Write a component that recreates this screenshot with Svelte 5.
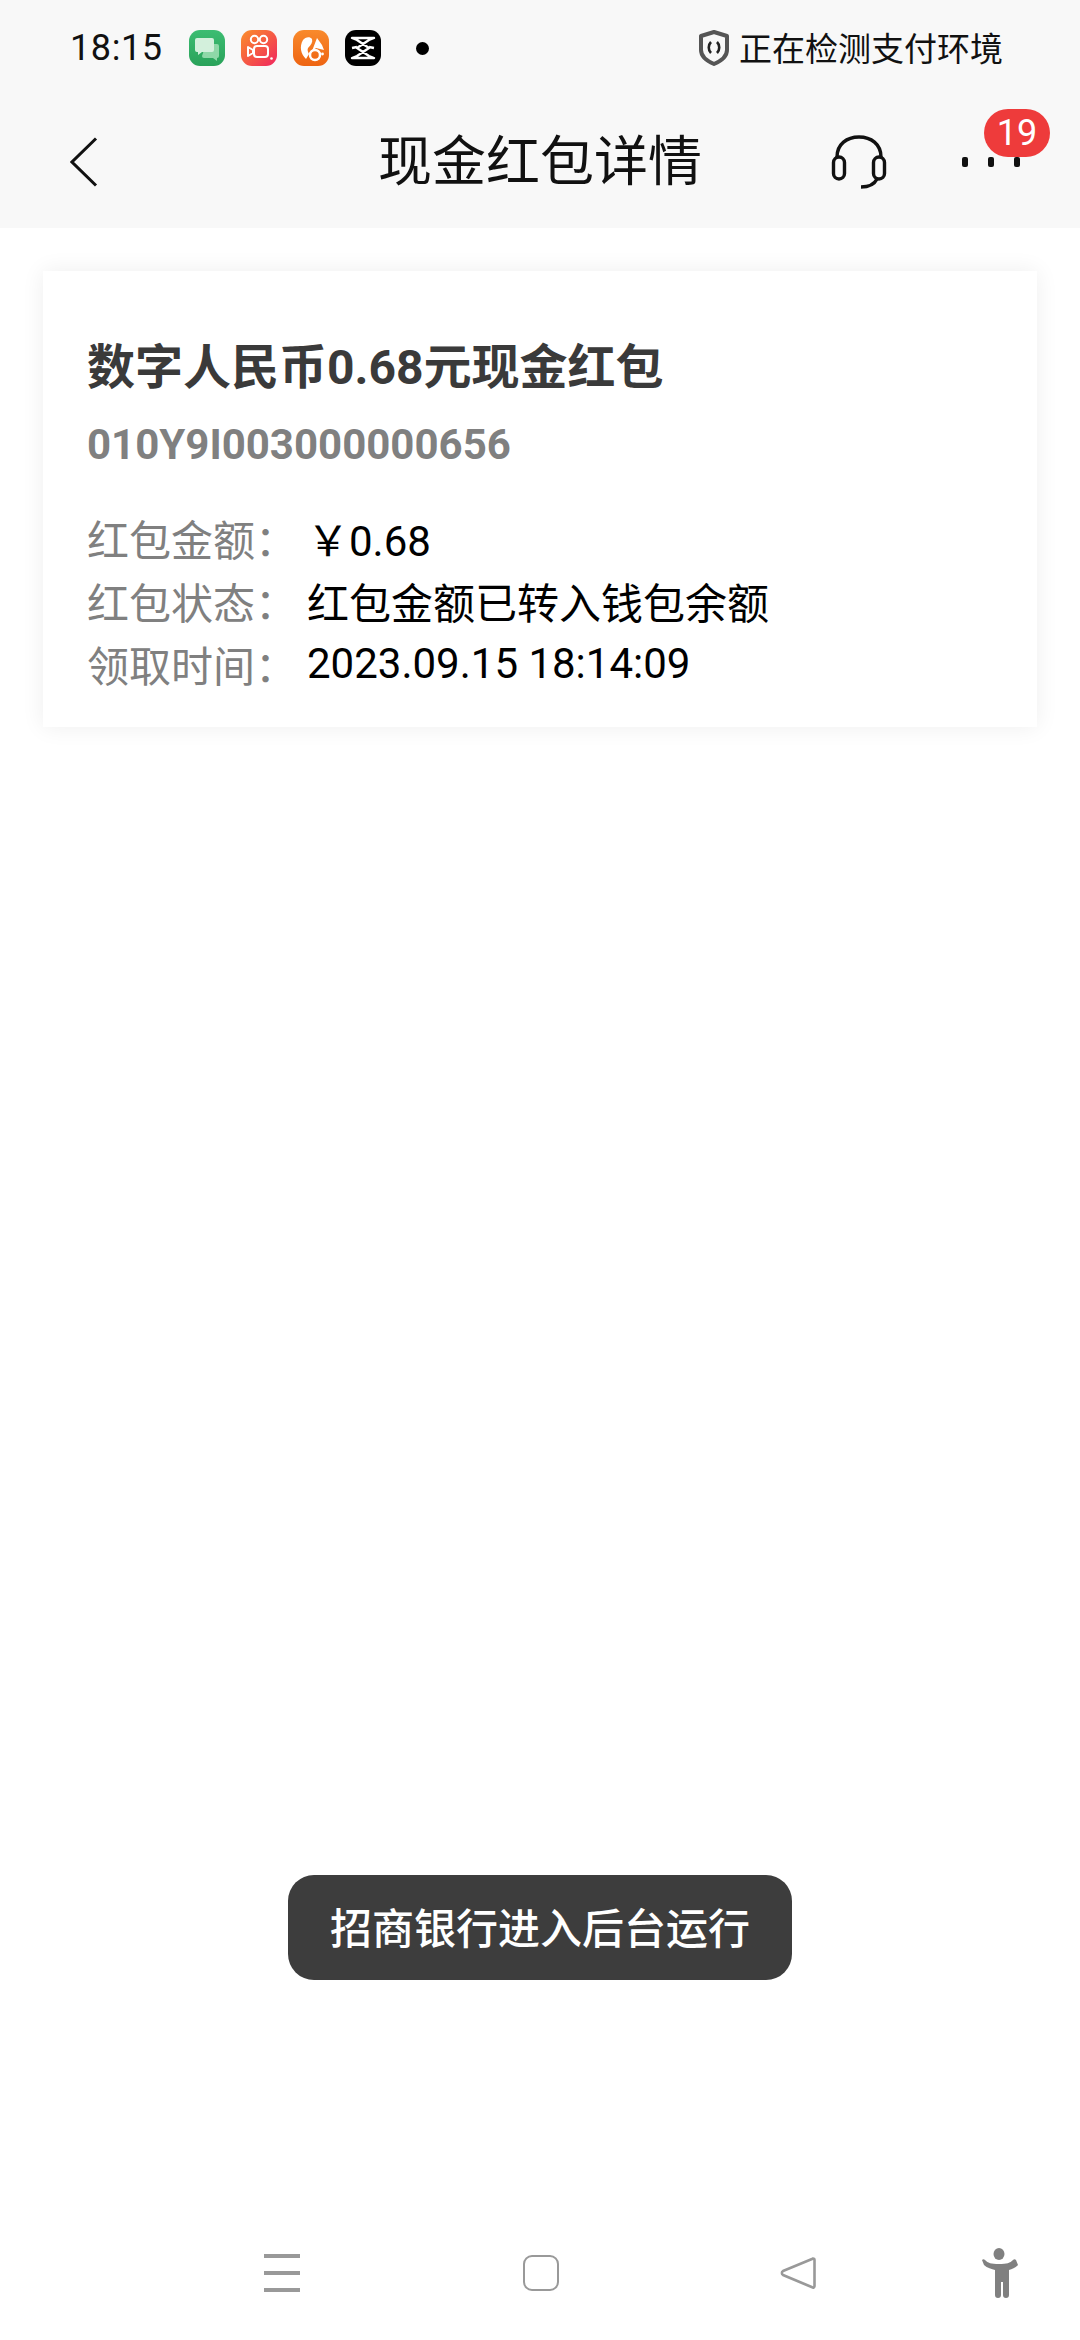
<script>
	const rows = [
		{ label: '红包金额：', value: '￥0.68' },
		{ label: '红包状态：', value: '红包金额已转入钱包余额' },
		{ label: '领取时间：', value: '2023.09.15 18:14:09' }
	];
</script>

<div class="screen">
	<div class="top">
		<div class="status">
			<span class="time">18:15</span>
			<div class="apps">
				<svg viewBox="0 0 36 36" width="36" height="36">
					<defs>
						<linearGradient id="g1" x1="0" y1="0" x2="0" y2="1"><stop offset="0" stop-color="#3cbd72" /><stop offset="1" stop-color="#2aa25a" /></linearGradient>
						<linearGradient id="g2" x1="0" y1="0" x2="1" y2="1"><stop offset="0" stop-color="#fb8f2a" /><stop offset="1" stop-color="#f0265f" /></linearGradient>
						<linearGradient id="g3" x1="0" y1="0" x2="0" y2="1"><stop offset="0" stop-color="#f98a2c" /><stop offset="1" stop-color="#ee6412" /></linearGradient>
					</defs>
					<rect width="36" height="36" rx="11" fill="url(#g1)" />
					<path d="M17 14h11q2 0 2 2v10q0 2-2 2v3l-4-3H15q-2 0-2-2z" fill="#8fd8a8" />
					<path d="M8 8h15q2 0 2 2v10q0 2-2 2H13l-4 3v-3H8q-2 0-2-2V10q0-2 2-2z" fill="#d3f0dc" />
				</svg>
				<svg viewBox="0 0 36 36" width="36" height="36">
					<rect width="36" height="36" rx="11" fill="url(#g2)" />
					<circle cx="13.500" cy="9.500" r="3.700" fill="none" stroke="#fff" stroke-width="2" />
					<circle cx="22.500" cy="9.500" r="3.700" fill="none" stroke="#fff" stroke-width="2" />
					<rect x="13" y="16" width="14" height="11" rx="3" fill="none" stroke="#fff" stroke-width="2" />
					<path d="M12 20l-5-3v9l5-3z" fill="none" stroke="#fff" stroke-width="2" stroke-linejoin="round" />
					<circle cx="30.500" cy="28.500" r="1.300" fill="#fff" />
				</svg>
				<svg viewBox="0 0 36 36" width="36" height="36">
					<rect width="36" height="36" rx="11" fill="url(#g3)" />
					<path d="M13 29c-5-5-7-12-3-19 2-3 7-4 9-1 1 3-1 6-4 9-1 2 0 4 1 6z" fill="#fff" />
					<path d="M24 8l5 7 2 5-8-2-4 3z" fill="#fff" />
					<circle cx="22" cy="25" r="5" fill="none" stroke="#fff" stroke-width="2.500" />
					<circle cx="29.500" cy="24" r="1.400" fill="#fff" />
				</svg>
				<svg viewBox="0 0 36 36" width="36" height="36">
					<rect width="36" height="36" rx="11" fill="#000" />
					<path d="M7 8l22 0-5 2-12 8 12 8 5 2-22 0 5-2 12-8-12-8z" fill="none" stroke="#fff" stroke-width="2.400" stroke-linejoin="round" />
					<path d="M7 18l5-1M29 18l-5-1" stroke="#fff" stroke-width="2.400" />
				</svg>
			</div>
			<span class="dot"></span>
			<div class="pay">
				<svg viewBox="0 0 32 36" width="32" height="36">
					<path d="M16 2l13 4v14c0 7-6 11-13 14C9 31 3 27 3 20V6z" fill="none" stroke="#555" stroke-width="4" stroke-linejoin="round" />
					<path d="M13 12c-3 3-3 8 0 11M19 12c3 3 3 8 0 11" fill="none" stroke="#222" stroke-width="2.600" />
				</svg>
				<span>正在检测支付环境</span>
			</div>
		</div>
		<header>
			<div class="back">
				<svg viewBox="0 0 28 50" width="28" height="50">
					<path d="M26 1.500L2 25l24 23.500" fill="none" stroke="#111" stroke-width="3" />
				</svg>
			</div>
			<h1>现金红包详情</h1>
			<div class="actions">
				<svg class="headset" viewBox="0 0 56 54" width="56" height="54">
					<path d="M6 22C6 9 16 2 28 2s22 7 22 20" fill="none" stroke="#111" stroke-width="3.400" />
					<rect x="2.500" y="22" width="11" height="22" rx="5.500" fill="none" stroke="#111" stroke-width="3.400" />
					<rect x="42.500" y="22" width="11" height="22" rx="5.500" fill="none" stroke="#111" stroke-width="3.400" />
					<path d="M46 44c-3 6-9 8-16 8" fill="none" stroke="#111" stroke-width="3.400" />
				</svg>
				<div class="more">
					<i></i><i></i><i></i>
					<span class="badge">19</span>
				</div>
			</div>
		</header>
	</div>

	<section class="card">
		<h2>数字人民币0.68元现金红包</h2>
		<p class="code">010Y9I003000000656</p>
		<dl>
			{#each rows as row}
				<div class="row">
					<dt>{row.label}</dt>
					<dd>{row.value}</dd>
				</div>
			{/each}
		</dl>
	</section>

	<div class="toast">招商银行进入后台运行</div>

	<nav>
		<div class="menu"><i></i><i></i><i></i></div>
		<div class="home"></div>
		<svg class="tri" viewBox="0 0 36 36" width="36" height="36">
			<path d="M33 3.500c1 0 1.500.6 1.500 1.500v26c0 1.500-1.300 2-2.300 1.300L3 20c-1.500-1-1.500-3 0-4L32 4z" fill="none" stroke="#999" stroke-width="2.600" stroke-linejoin="round" />
		</svg>
		<svg class="person" viewBox="0 0 38 50" width="38" height="50">
			<ellipse cx="19" cy="6" rx="5.500" ry="6" fill="#808080" />
			<path d="M2 12c1-1 2-1 3 0 3 3 6 4 14 4s11-1 14-4c1-1 2-1 3 0l2 5c-3 3-6 4-9 5v8h0v17c0 2-1 3-3 3s-3-1-3-3V34h-2v13c0 2-1 3-3 3s-3-1-3-3V22c-3-1-8-2-11-5z" fill="#808080" />
		</svg>
	</nav>
</div>

<style>
	:global(body) {
		background: #fff;
	}

	.screen {
		position: relative;
		width: 1080px;
		height: 2340px;
		display: flex;
		flex-direction: column;
		overflow: hidden;
		background: #fff;
		font-family: Roboto, 'Noto Sans CJK SC', sans-serif;
		color: #000;
	}

	.top {
		background: #f8f8f8;
		height: 228px;
		flex: none;
	}

	.status {
		display: flex;
		align-items: center;
		height: 96px;
		padding: 0 77px 0 70px;
	}

	.time {
		font-size: 36px;
		letter-spacing: 0.6px;
		color: #111;
		width: 119px;
	}

	.apps {
		display: flex;
		gap: 16px;
	}

	.apps svg {
		display: block;
	}

	.dot {
		width: 13px;
		height: 13px;
		border-radius: 50%;
		background: #000;
		margin-left: 35px;
	}

	.pay {
		margin-left: auto;
		display: flex;
		align-items: center;
		gap: 9px;
		font-size: 33px;
		color: #111;
	}

	.pay span {
		margin-top: -2px;
	}

	header {
		display: grid;
		grid-template-columns: 1fr auto 1fr;
		align-items: center;
		height: 132px;
		padding: 0 57px;
	}

	.back {
		padding-left: 13px;
	}

	.back svg {
		display: block;
	}

	h1 {
		margin: 2px 0 0;
		font-size: 54px;
		font-weight: 400;
		color: #111;
		line-height: 1;
	}

	.actions {
		display: flex;
		justify-content: flex-end;
		align-items: center;
		gap: 75px;
	}

	.more {
		position: relative;
		display: flex;
		gap: 20px;
		margin: 0 3px 0 0;
	}

	.more i {
		width: 6px;
		height: 10px;
		border-radius: 2px;
		background: #111;
	}

	.badge {
		position: absolute;
		left: 22px;
		top: -48px;
		width: 66px;
		height: 48px;
		border-radius: 24px;
		background: #ee3b3b;
		color: #fff;
		font-size: 36px;
		line-height: 48px;
		text-align: center;
	}

	.card {
		margin: 43px 43px 0 43px;
		height: 456px;
		box-sizing: border-box;
		padding: 65px 44px 0;
		background: #fff;
		box-shadow: 0 0 22px rgba(0, 0, 0, 0.07);
	}

	h2 {
		margin: 0;
		font-size: 48px;
		font-weight: 700;
		line-height: 64px;
		color: #3a3a3a;
	}

	.code {
		margin: 20px 0 0;
		font-size: 42px;
		font-weight: 700;
		line-height: 50px;
		color: #808080;
	}

	dl {
		margin: 36px 0 0;
	}

	.row {
		display: flex;
		height: 63px;
		align-items: center;
		font-size: 42px;
	}

	dt {
		width: 220px;
		color: #808080;
	}

	dd {
		margin: 0;
		color: #000;
	}

	.toast {
		position: absolute;
		left: 288px;
		top: 1875px;
		width: 504px;
		height: 105px;
		border-radius: 26px;
		background: #3d3d3d;
		color: #fff;
		font-size: 42px;
		font-weight: 500;
		line-height: 109px;
		text-align: center;
	}

	nav {
		margin-top: auto;
		height: 104px;
		display: flex;
		align-items: center;
		padding-left: 264px;
		margin-bottom: 15px;
	}

	.menu {
		display: flex;
		flex-direction: column;
		gap: 13px;
		width: 36px;
		flex: none;
	}

	.menu i {
		height: 4px;
		background: #999;
	}

	.home {
		margin-left: 223px;
		width: 36px;
		height: 36px;
		box-sizing: border-box;
		border: 2.6px solid #999;
		border-radius: 9px;
		flex: none;
	}

	.tri {
		margin-left: 221px;
		flex: none;
	}

	.person {
		margin-left: 164px;
		flex: none;
	}
</style>
